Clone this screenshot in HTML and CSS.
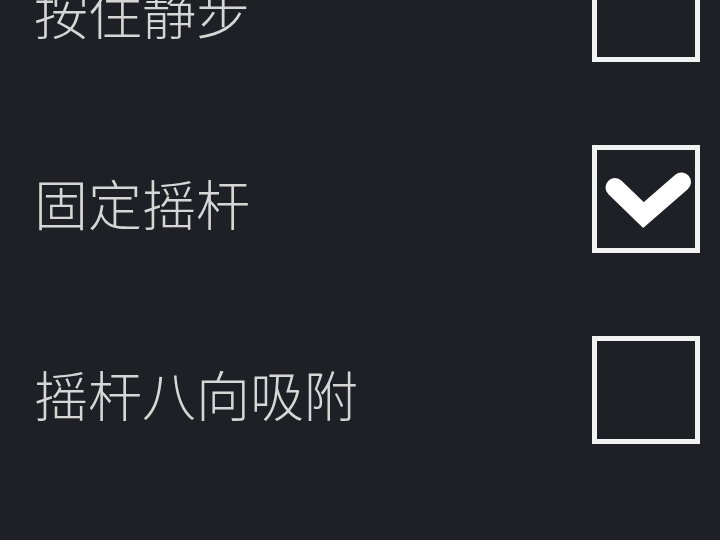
FILE: index.html
```html
<!DOCTYPE html>
<html lang="zh-CN">
<head>
<meta charset="utf-8">
<link rel="stylesheet" href="styles.css">
</head>
<body>
<ul class="settings">
  <li class="row">
    <span class="label">按住静步</span>
    <span class="box"></span>
  </li>
  <li class="row">
    <span class="label">固定摇杆</span>
    <span class="box checked">
      <svg viewBox="0 0 98 98" width="98" height="98"><polyline points="18,37.5 46.5,65 84.5,32" fill="none" stroke="#ffffff" stroke-width="19" stroke-linejoin="miter" stroke-linecap="round"/></svg>
    </span>
  </li>
  <li class="row">
    <span class="label">摇杆八向吸附</span>
    <span class="box"></span>
  </li>
</ul>
</body>
</html>
```
FILE: styles.css
```css
html, body {
  margin: 0;
  padding: 0;
  background: #1f2025;
  overflow: hidden;
}
body {
  width: 720px;
  height: 540px;
  font-family: "Noto Sans CJK SC", "Noto Sans", sans-serif;
}
.settings {
  list-style: none;
  margin: -88px 0 0 0;
  padding: 0;
}
.row {
  height: 191px;
  display: flex;
  align-items: center;
  justify-content: space-between;
  padding: 0 20px 0 34px;
}
.label {
  color: #d6d6d6;
  font-size: 54px;
  font-weight: 300;
  line-height: 1;
  position: relative;
  top: 4px;
}
.box {
  width: 98px;
  height: 98px;
  border: 5px solid #f2f2f2;
  display: block;
}
.box svg {
  display: block;
}
```
